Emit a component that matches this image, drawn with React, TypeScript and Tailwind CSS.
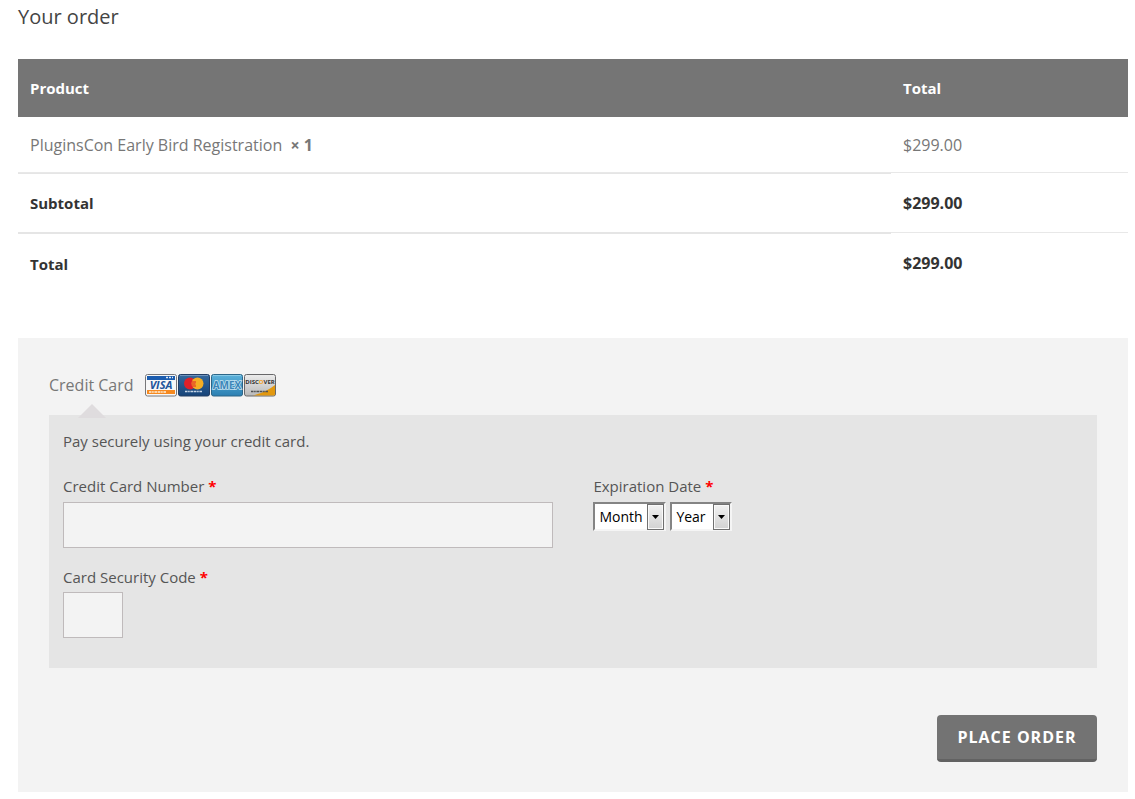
import type { ReactNode } from 'react'

const months = ['01', '02', '03', '04', '05', '06', '07', '08', '09', '10', '11', '12']
const years = ['2014', '2015', '2016', '2017', '2018', '2019', '2020']

function Required() {
  return <abbr title="required" className="font-bold text-[#ff0000] no-underline">*</abbr>
}

function CardText({ fill }: { fill: string }) {
  return <path d="M7 17.500h17" stroke={fill} strokeWidth="1.500" strokeDasharray="2.500 .6 1.600 .7 3 .6" />
}

function VisaIcon() {
  return (
    <svg width="32" height="23" viewBox="0 0 32 23" role="img" aria-label="Visa">
      <rect x=".5" y=".5" width="31" height="21.500" rx="2" fill="#f7f7f7" stroke="#77777a" />
      <path d="M2 2h28v4H2z" fill="#1b5cae" />
      <path d="M21 3.500h7" stroke="#dfe9f5" strokeWidth="1.500" strokeDasharray="2 1" />
      <path d="M2 16h28v4H2z" fill="#f6891f" />
      <path d="M4 18h17" stroke="#fff0dc" strokeWidth="1.500" strokeDasharray="2.500 .6 1.600 .7 3 .6" />
      <text x="16" y="15" textAnchor="middle" fontFamily="Open Sans, sans-serif" fontSize="11" fontWeight="700" fontStyle="italic" fill="#20539b">VISA</text>
    </svg>
  )
}

function MastercardIcon() {
  return (
    <svg width="32" height="23" viewBox="0 0 32 23" role="img" aria-label="MasterCard">
      <defs>
        <linearGradient id="mc" x2="0" y2="1">
          <stop stopColor="#35699f" />
          <stop offset="1" stopColor="#154378" />
        </linearGradient>
      </defs>
      <rect x=".5" y=".5" width="31" height="21.500" rx="2" fill="url(#mc)" stroke="#233e65" />
      <path d="M2 1.500h28" stroke="#6f93bc" />
      <circle cx="12" cy="9.500" r="6" fill="#df2029" />
      <circle cx="19.500" cy="9.500" r="6" fill="#f5ae24" />
      <path d="M14 8h4M13.500 10h4M14 12h4" stroke="#df2029" />
      <CardText fill="#c7d5e5" />
    </svg>
  )
}

function AmexIcon() {
  return (
    <svg width="32" height="23" viewBox="0 0 32 23" role="img" aria-label="American Express">
      <defs>
        <linearGradient id="amex" x2="0" y2="1">
          <stop stopColor="#5cb2db" />
          <stop offset="1" stopColor="#2b7fb2" />
        </linearGradient>
      </defs>
      <rect x=".5" y=".5" width="31" height="21.500" rx="2" fill="url(#amex)" stroke="#2c6688" />
      <path d="M2 1.500h28" stroke="#86c9e6" />
      <text x="16" y="14.500" textAnchor="middle" fontFamily="Open Sans, sans-serif" fontSize="10" fontWeight="700" fill="#3b86b8" stroke="#c4e2f1" strokeWidth="1.500" paintOrder="stroke">AMEX</text>
    </svg>
  )
}

function DiscoverIcon() {
  return (
    <svg width="32" height="23" viewBox="0 0 32 23" role="img" aria-label="Discover">
      <defs>
        <linearGradient id="discover" x2="0" y2="1">
          <stop stopColor="#ececec" />
          <stop offset="1" stopColor="#b9b9b9" />
        </linearGradient>
      </defs>
      <rect x=".5" y=".5" width="31" height="21.500" rx="2" fill="url(#discover)" stroke="#68686a" />
      <path d="M8.500 21.500Q22 18.500 31 11v9q0 1.500-1.500 1.500z" fill="#e2980f" />
      <text x="16" y="10" textAnchor="middle" fontFamily="Open Sans, sans-serif" fontSize="6" fontWeight="700" fill="#333">
        DISC<tspan fill="#f0a020">O</tspan>VER
      </text>
      <CardText fill="#505050" />
    </svg>
  )
}

function DateSelect({ label, className, children }: { label: string; className: string; children: ReactNode }) {
  return (
    <div className={`relative h-[29px] ${className}`}>
      <select
        aria-label={label}
        className="block h-full w-full appearance-none border-2 border-t-[#848484] border-r-[#f5f5f5] border-b-[#f5f5f5] border-l-[#848484] bg-white pl-1 text-sm text-black"
      >
        {children}
      </select>
      <span className="pointer-events-none absolute top-[2px] right-[2px] bottom-[1px] flex w-[17px] items-center justify-center border border-[#707070] bg-linear-to-b from-[#f2f2f2] to-[#d2d2d2] shadow-[inset_0_0_0_1px_#fafafa]">
        <svg width="7" height="4" viewBox="0 0 7 4" aria-hidden="true">
          <path d="M0 0h7L3.500 4z" fill="#000" />
        </svg>
      </span>
    </div>
  )
}

export default function App() {
  return (
    <main className="bg-white pr-[7px] pb-[7px] pl-[18px] font-['Open_Sans',sans-serif] text-[15px] leading-6 text-[#555555]">
      <h3 className="mb-7 pt-[3px] text-xl leading-7 text-[#444444]">Your order</h3>

      <table className="w-full table-fixed border-separate border-spacing-0 text-left">
        <thead>
          <tr className="h-[58px] bg-[#757575] text-white">
            <th scope="col" className="px-3 font-bold">Product</th>
            <th scope="col" className="w-[237px] px-3 font-bold">Total</th>
          </tr>
        </thead>
        <tbody className="text-base text-[#777777]">
          <tr className="h-14">
            <td className="border-b border-[#e8e8e8] px-3">
              PluginsCon Early Bird Registration&nbsp; <strong className="font-bold">× 1</strong>
            </td>
            <td className="border-b border-[#e8e8e8] px-3">$299.00</td>
          </tr>
        </tbody>
        <tfoot className="text-[#333333]">
          <tr className="h-[60px]">
            <th scope="row" className="border-y border-[#e5e5e5] px-3 font-bold">Subtotal</th>
            <td className="border-b border-[#e8e8e8] px-3 text-base font-bold">$299.00</td>
          </tr>
          <tr className="h-[60px]">
            <th scope="row" className="border-t border-[#e5e5e5] px-3 font-bold">Total</th>
            <td className="px-3 text-base font-bold">$299.00</td>
          </tr>
        </tfoot>
      </table>

      <form className="mt-[45px] bg-[#f3f3f3] px-[31px] pt-[35px] pb-[30px]" onSubmit={(e) => e.preventDefault()}>
        <div className="flex items-center gap-[11px] text-base text-[#777777]">
          <span>Credit Card</span>
          <div className="flex gap-px">
            <VisaIcon />
            <MastercardIcon />
            <AmexIcon />
            <DiscoverIcon />
          </div>
        </div>

        <div className="relative mt-[18px] bg-[#e5e5e5] px-3.5 pt-3.5 pb-[30px]">
          <svg className="absolute -top-[11px] left-[29px]" width="28" height="14" viewBox="0 0 28 14" aria-hidden="true">
            <path d="M14 0l14 14H0z" fill="#dfdcde" />
          </svg>
          <p>Pay securely using your credit card.</p>
          <div className="mt-[21px] flex justify-between">
            <div className="w-[48%]">
              <label htmlFor="card-number" className="block">Credit Card Number <Required /></label>
              <input
                id="card-number"
                type="text"
                autoComplete="off"
                className="mt-1 block h-[46px] w-full border border-[#bfbabb] bg-[#f3f3f3] px-3"
              />
            </div>
            <fieldset className="w-[48%]">
              <legend>Expiration Date <Required /></legend>
              <div className="mt-1 flex gap-1">
                <DateSelect label="Month" className="w-[73px]">
                  <option>Month</option>
                  {months.map((month) => <option key={month}>{month}</option>)}
                </DateSelect>
                <DateSelect label="Year" className="w-[62px]">
                  <option>Year</option>
                  {years.map((year) => <option key={year}>{year}</option>)}
                </DateSelect>
              </div>
            </fieldset>
          </div>
          <div className="mt-[17px]">
            <label htmlFor="card-cvc" className="block">Card Security Code <Required /></label>
            <input
              id="card-cvc"
              type="text"
              autoComplete="off"
              className="mt-[3px] block h-[46px] w-[60px] border border-[#bfbabb] bg-[#f3f3f3] px-3"
            />
          </div>
        </div>

        <div className="mt-[47px] flex justify-end">
          <button
            type="submit"
            className="h-[47px] min-w-40 rounded-[4px] border-b-3 border-[#626262] bg-[#737373] px-5 text-base font-bold tracking-[1px] text-white uppercase"
          >
            Place order
          </button>
        </div>
      </form>
    </main>
  )
}
